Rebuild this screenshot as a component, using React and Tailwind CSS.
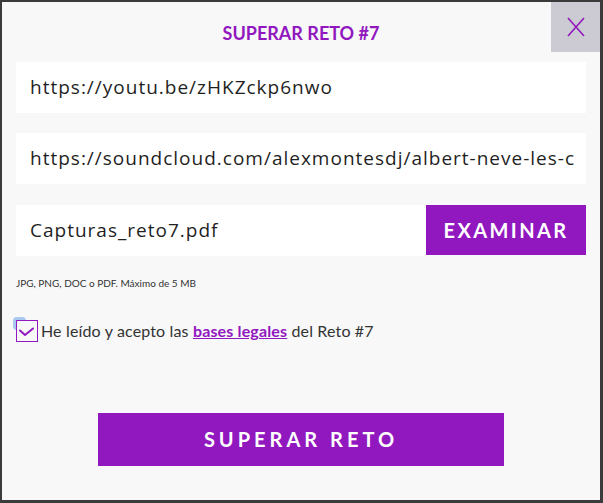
import React from "react";

const purpura = "#9117bf";

function CampoTexto({ valor, className = "" }) {
  return (
    <div
      className={`flex h-[51px] items-center bg-white pl-[14px] text-[19px] tracking-[1px] text-[#1f1f1f] overflow-hidden whitespace-nowrap ${className}`}
      style={{ fontFamily: "'Open Sans', sans-serif" }}
    >
      {valor}
    </div>
  );
}

export default function App() {
  return (
    <main
      className="h-[503px] w-[603px] bg-[#3b3b3b] pt-[2px] pl-[2px]"
      style={{ fontFamily: "Lato, 'Open Sans', sans-serif" }}
    >
      <section className="relative h-[498px] w-[598px] bg-[#f8f8f8] px-[14px] pt-[19px]">
        <button className="absolute right-0 top-0 flex h-[50px] w-[49px] items-center justify-center bg-[#cccbd3]">
          <svg width="20" height="22" viewBox="0 0 20 22" fill="none">
            <path d="M2 2 L18 20 M18 2 L2 20" stroke={purpura} strokeWidth="1.6" />
          </svg>
        </button>

        <h1 className="text-center text-[18px] font-bold leading-[24px] text-[#9117bf]">
          SUPERAR RETO #7
        </h1>

        <CampoTexto className="mt-[17px]" valor="https://youtu.be/zHKZckp6nwo" />
        <CampoTexto
          className="mt-[20px]"
          valor="https://soundcloud.com/alexmontesdj/albert-neve-les-c"
        />

        <div className="mt-[21px] flex h-[51px]">
          <div
            className="flex flex-1 items-center bg-white pl-[14px] text-[19px] tracking-[1px] text-[#1f1f1f]"
            style={{ fontFamily: "'Open Sans', sans-serif" }}
          >
            Capturas_reto7.pdf
          </div>
          <button className="flex h-[50px] w-[160px] items-center justify-center bg-[#9117bf] text-[20px] font-bold tracking-[0.12em] text-white">
            EXAMINAR
          </button>
        </div>

        <p className="mt-[21px] text-[10px] leading-[12px] text-[#333]">
          JPG, PNG, DOC o PDF. Máximo de 5 MB
        </p>

        <label className="mt-[30px] flex items-center gap-[3px] text-[16px] tracking-[0.15px] text-[#333]">
          <span className="relative h-[22px] w-[22px]">
            <span className="absolute -left-[3px] -top-[3px] h-[13px] w-[13px] rounded-[4px] bg-[#a9c8f0]" />
            <span className="absolute inset-0 border border-[#9117bf] bg-[#f8f8f8]">
              <svg width="20" height="20" viewBox="0 0 20 20" fill="none">
                <path
                  d="M3 9.5 L8 14 L16 7.5"
                  stroke={purpura}
                  strokeWidth="2"
                  strokeLinecap="round"
                  strokeLinejoin="round"
                />
              </svg>
            </span>
          </span>
          <span>
            He leído y acepto las{" "}
            <a className="font-bold text-[#9117bf] underline">bases legales</a>{" "}
            del Reto #7
          </span>
        </label>

        <div className="mt-[70px] flex justify-center">
          <button className="flex h-[53px] w-[406px] items-center justify-center bg-[#9117bf] pb-[2px] text-[20px] font-bold tracking-[0.2em] text-white">
            SUPERAR RETO
          </button>
        </div>
      </section>
    </main>
  );
}
